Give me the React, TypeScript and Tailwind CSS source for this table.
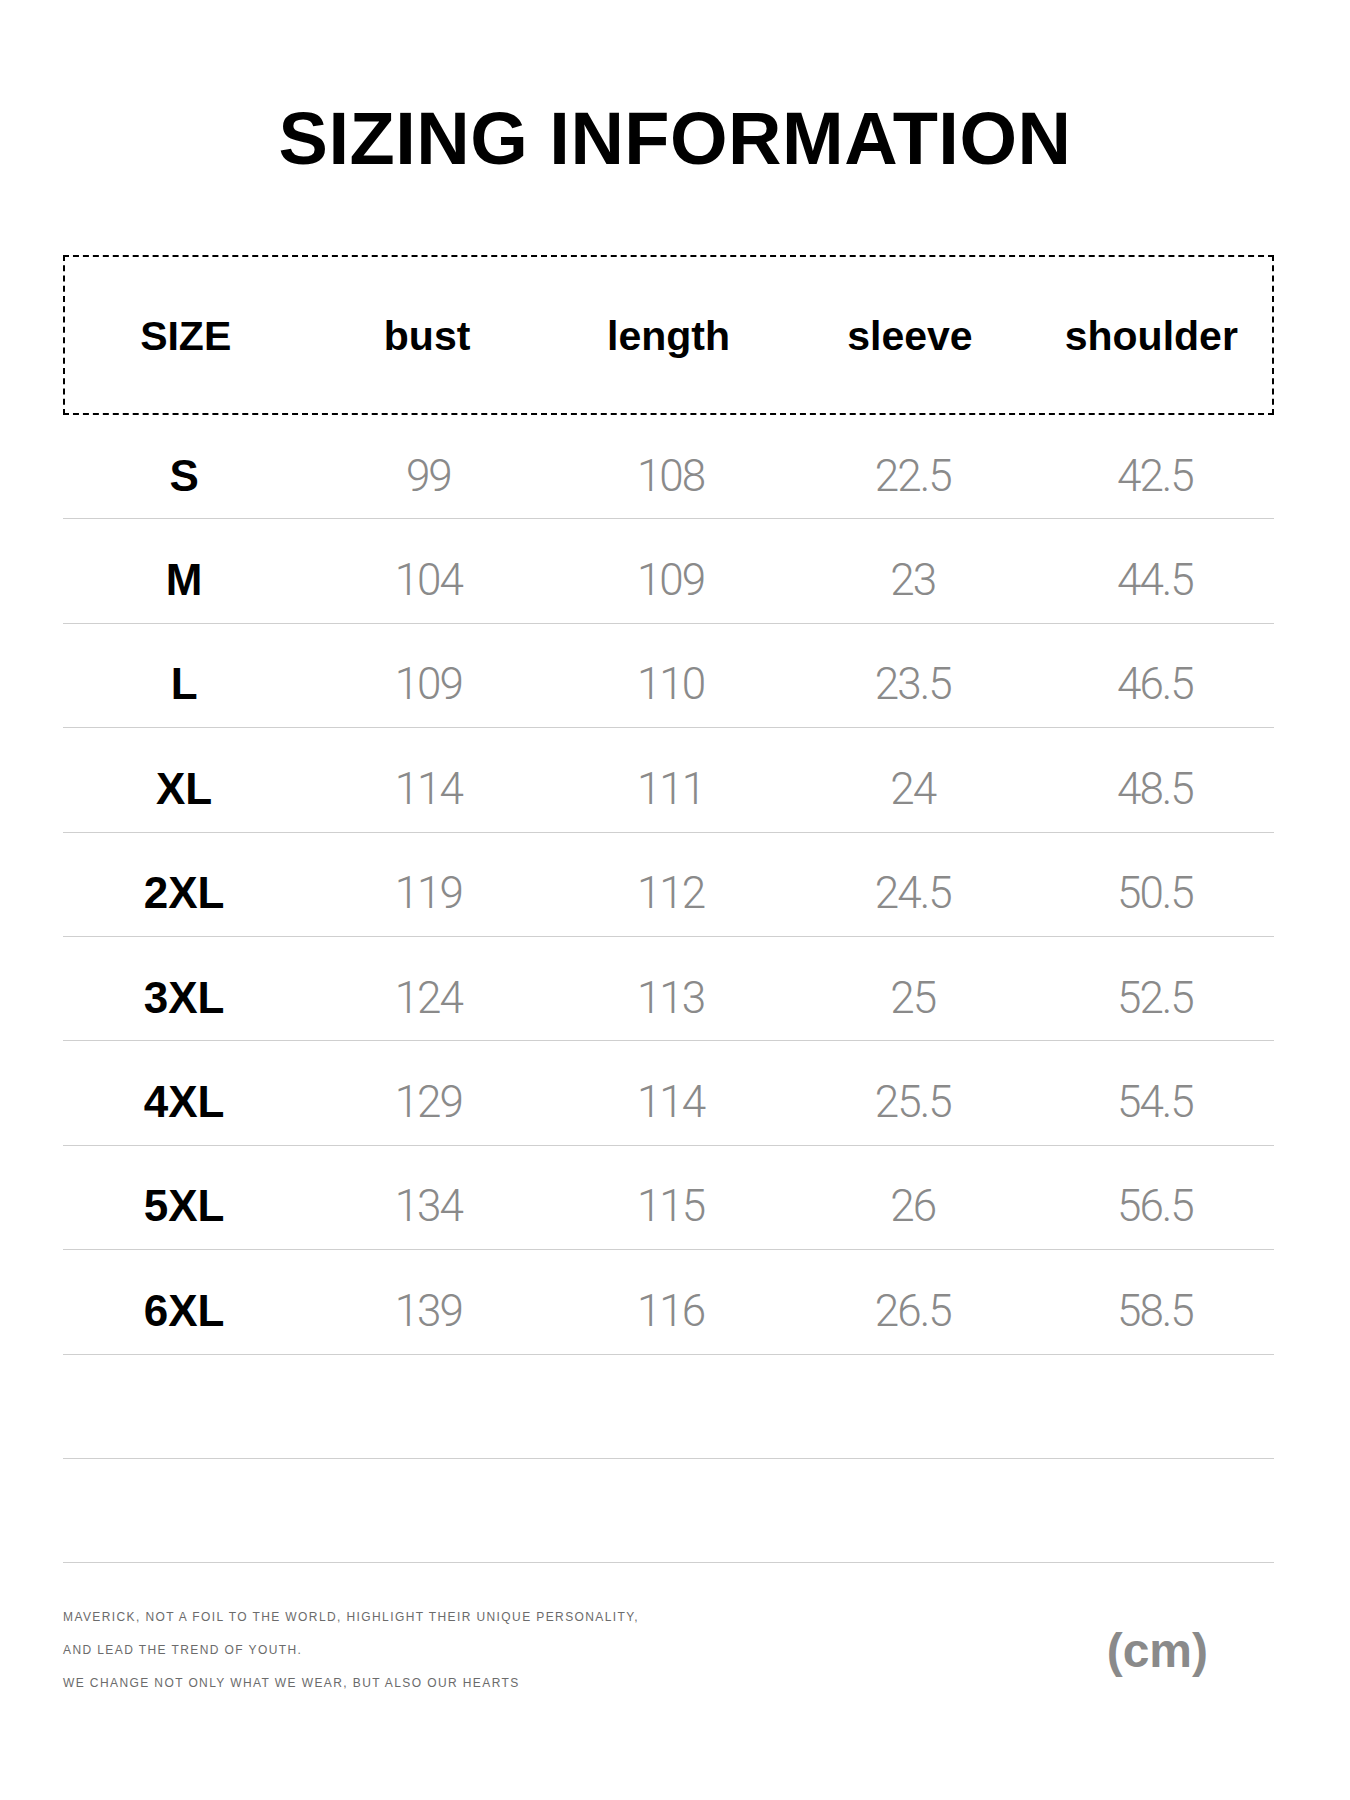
import React from "react"

const headers = ["SIZE", "bust", "length", "sleeve", "shoulder"]

const rows = [
  ["S", "99", "108", "22.5", "42.5"],
  ["M", "104", "109", "23", "44.5"],
  ["L", "109", "110", "23.5", "46.5"],
  ["XL", "114", "111", "24", "48.5"],
  ["2XL", "119", "112", "24.5", "50.5"],
  ["3XL", "124", "113", "25", "52.5"],
  ["4XL", "129", "114", "25.5", "54.5"],
  ["5XL", "134", "115", "26", "56.5"],
  ["6XL", "139", "116", "26.5", "58.5"],
]

const App = () => {
  return (
    <div className="w-[1350px] h-[1800px] bg-white pt-[102px] font-['Liberation_Sans',Arial,sans-serif]">
      <h1 className="text-center text-[74px] leading-[74px] font-bold text-black tracking-[0.5px]">
        SIZING INFORMATION
      </h1>

      <div className="ml-[63px] w-[1211px] mt-[79px]">
        {/* header */}
        <div className="h-[160px] border-2 border-dashed border-black grid grid-cols-5 items-center">
          {headers.map((h) => (
            <div key={h} className="text-center text-[41px] leading-none font-bold text-black pt-[3px]">
              {h}
            </div>
          ))}
        </div>

        {/* rows */}
        {rows.map((r) => (
          <div
            key={r[0]}
            className="h-[104.4px] border-b-[1.5px] border-[#cfcfcf] grid grid-cols-5 items-center pt-[18px]"
          >
            <div className="text-center text-[44px] leading-none font-bold text-black">{r[0]}</div>
            {r.slice(1).map((v, i) => (
              <div
                key={i}
                className="text-center text-[44px] leading-none font-light text-[#8a8a8a] tracking-[-2px] pl-[4px] font-['Roboto',sans-serif]"
              >
                {v}
              </div>
            ))}
          </div>
        ))}
        <div className="h-[104.4px] border-b-[1.5px] border-[#cfcfcf]" />
        <div className="h-[104.4px] border-b-[1.5px] border-[#cfcfcf]" />

        {/* footer */}
        <div className="flex justify-between items-center mt-[38px]">
          <div className="text-[12px] leading-[33px] text-[#6b6b6b] tracking-[1.4px]">
            <div>MAVERICK, NOT A FOIL TO THE WORLD, HIGHLIGHT THEIR UNIQUE PERSONALITY,</div>
            <div>AND LEAD THE TREND OF YOUTH.</div>
            <div>WE CHANGE NOT ONLY WHAT WE WEAR, BUT ALSO OUR HEARTS</div>
          </div>
          <div className="text-[48px] leading-none font-bold text-[#8a8a8a] mr-[66px]">(cm)</div>
        </div>
      </div>
    </div>
  )
}

export default App
